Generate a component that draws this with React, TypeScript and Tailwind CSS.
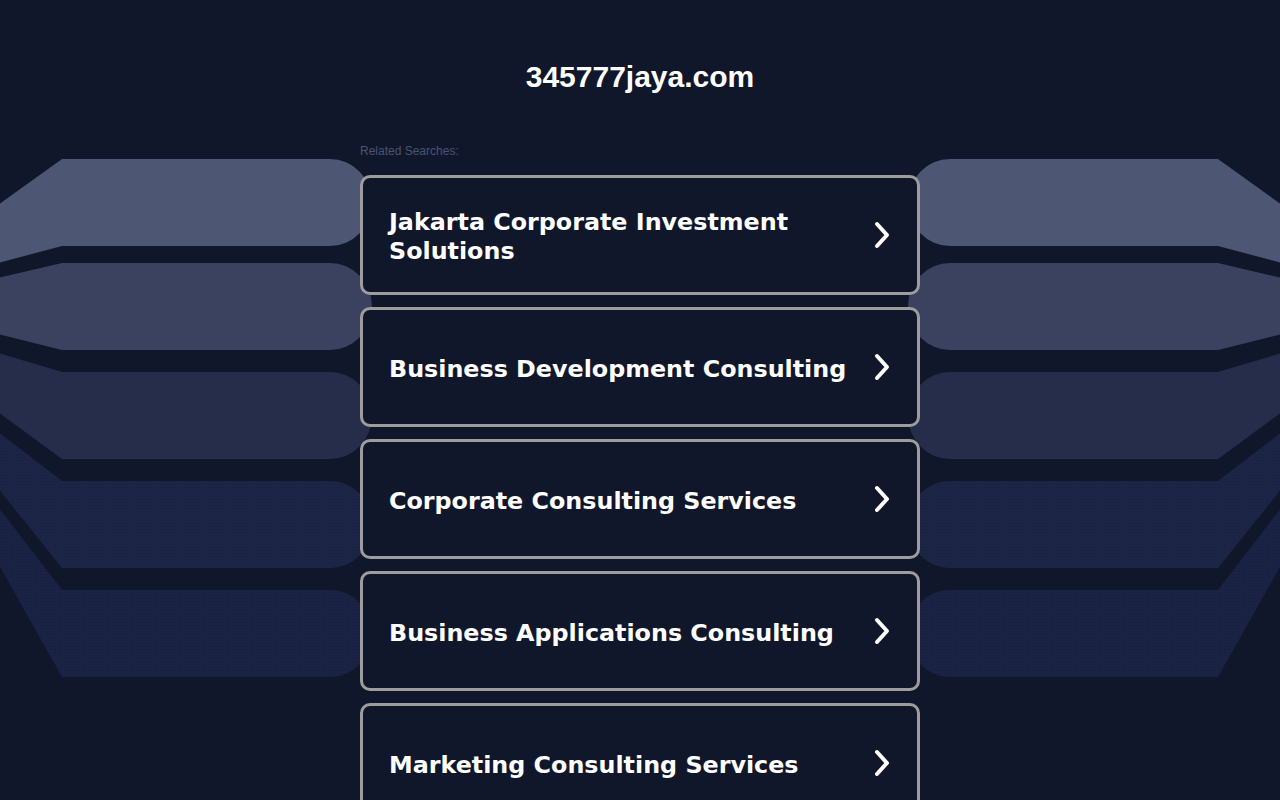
import React from 'react';

const searches = [
  'Jakarta Corporate Investment Solutions',
  'Business Development Consulting',
  'Corporate Consulting Services',
  'Business Applications Consulting',
  'Marketing Consulting Services',
];

// left-hand bands: [top at x=0, top at x=62, bottom at x=62, bottom at x=0, fill]
const bands: [number, number, number, number, string][] = [
  [205, 159, 246, 263, '#4d5672'],
  [278, 263, 350, 334, '#3b425f'],
  [353, 372, 459, 412, '#262d4b'],
  [432, 481, 568, 488, 'url(#dots4)'],
  [507, 590, 677, 563, 'url(#dots5)'],
];

const bandPath = ([t0, t1, b1, b0]: [number, number, number, number, string]) => {
  const ry = (b1 - t1) / 2;
  return `M-2 ${t0} L62 ${t1} L330 ${t1} A42 ${ry} 0 0 1 330 ${b1} L62 ${b1} L-2 ${b0} Z`;
};

const Backdrop = () => (
  <svg
    className="absolute left-0 top-0 pointer-events-none"
    width="1280"
    height="800"
    viewBox="0 0 1280 800"
  >
    <defs>
      <pattern id="dots4" width="3" height="3" patternUnits="userSpaceOnUse">
        <rect width="3" height="3" fill="#1d2546" />
        <rect x="1" y="1" width="1" height="1" fill="#182040" />
      </pattern>
      <pattern id="dots5" width="3" height="3" patternUnits="userSpaceOnUse">
        <rect width="3" height="3" fill="#1b2344" />
        <rect x="1" y="1" width="1" height="1" fill="#161d3c" />
      </pattern>
    </defs>
    {bands.map((b, i) => (
      <g key={i}>
        <path d={bandPath(b)} fill={b[4]} />
        <path d={bandPath(b)} fill={b[4]} transform="translate(1280 0) scale(-1 1)" />
      </g>
    ))}
  </svg>
);

const Chevron = () => (
  <svg width="16" height="28" viewBox="0 0 16 28" className="shrink-0">
    <path
      d="M3 3 L13 14 L3 25"
      fill="none"
      stroke="white"
      strokeWidth="4"
      strokeLinecap="round"
      strokeLinejoin="round"
    />
  </svg>
);

export default function App() {
  return (
    <div className="relative min-h-screen overflow-hidden bg-[#11172b]">
      <Backdrop />
      <div className="relative mx-auto w-[560px] pt-[59px]">
        <h1 className="text-center text-[30px] leading-[36px] font-bold text-white font-['Liberation_Sans',Arial,sans-serif]">
          345777jaya.com
        </h1>
        <p className="mt-[49px] text-[12px] leading-[14px] text-[#4a5474] font-['Liberation_Sans',Arial,sans-serif]">
          Related Searches:
        </p>
        <div className="mt-[17px] flex flex-col gap-[12px]">
          {searches.map((s) => (
            <a
              key={s}
              href="#"
              className="flex h-[120px] items-center justify-between gap-4 rounded-[10px] border-[3px] border-[#9d9d9d] bg-[#11172b] pl-[26px] pr-[27px]"
            >
              <span className="block pt-[4px] text-[23.8px] leading-[29px] font-bold text-white font-['DejaVu_Sans',Verdana,sans-serif]">
                {s}
              </span>
              <Chevron />
            </a>
          ))}
        </div>
      </div>
    </div>
  );
}
